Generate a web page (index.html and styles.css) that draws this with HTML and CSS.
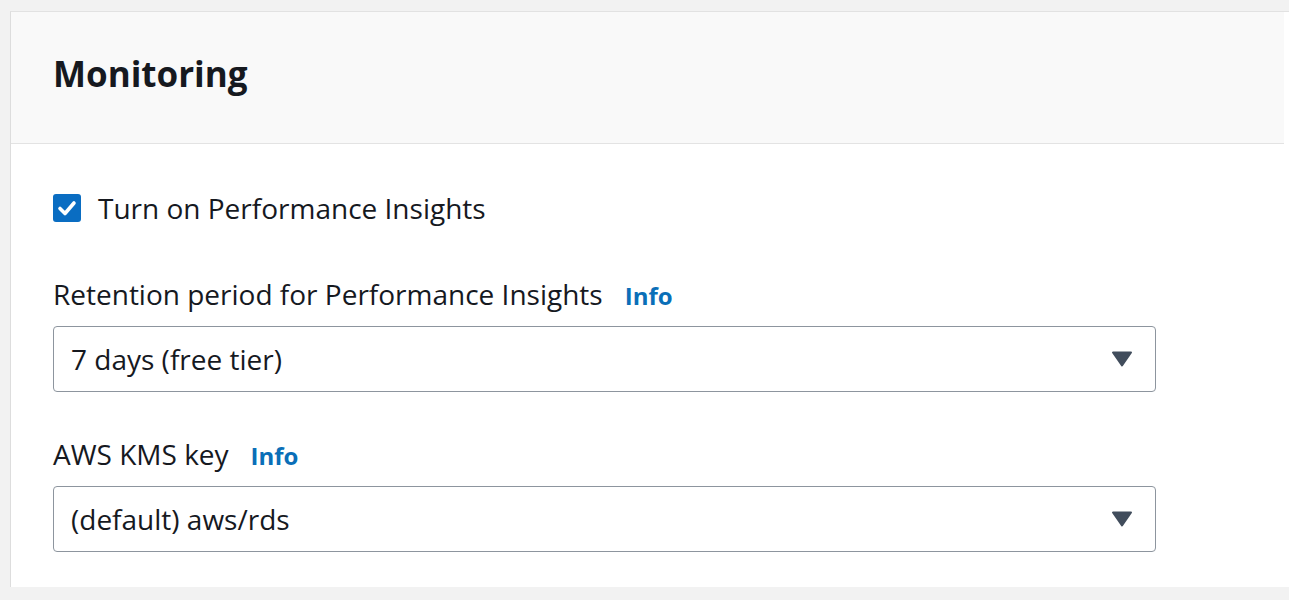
FILE: index.html
```html
<!DOCTYPE html>
<html>
<head>
<meta charset="utf-8">
<link rel="stylesheet" href="styles.css">
</head>
<body>
<div class="page">
  <div class="card">
    <div class="card-header">
      <h2 class="title">Monitoring</h2>
    </div>
    <div class="card-body">
      <label class="check-row">
        <span class="checkbox">
          <svg viewBox="0 0 28 28" width="28" height="28"><path d="M7 14.5 L12 19.5 L21 9" fill="none" stroke="#fff" stroke-width="3.6" stroke-linecap="round" stroke-linejoin="round"/></svg>
        </span>
        <span class="check-label">Turn on Performance Insights</span>
      </label>

      <div class="field">
        <div class="field-label"><span>Retention period for Performance Insights</span><a class="info">Info</a></div>
        <div class="select">
          <span class="select-value">7 days (free tier)</span>
          <svg class="caret" viewBox="0 0 22 16" width="22" height="16"><path d="M2 1.5 H20 L11 14.5 Z" fill="#414d5c" stroke="#414d5c" stroke-width="2" stroke-linejoin="round"/></svg>
        </div>
      </div>

      <div class="field">
        <div class="field-label"><span>AWS KMS key</span><a class="info">Info</a></div>
        <div class="select">
          <span class="select-value">(default) aws/rds</span>
          <svg class="caret" viewBox="0 0 22 16" width="22" height="16"><path d="M2 1.5 H20 L11 14.5 Z" fill="#414d5c" stroke="#414d5c" stroke-width="2" stroke-linejoin="round"/></svg>
        </div>
      </div>
    </div>
  </div>
</div>
</body>
</html>
```

FILE: styles.css
```css
* { box-sizing: border-box; }
html, body { margin: 0; padding: 0; }
body {
  background: #f2f2f2;
  font-family: "Open Sans", "Noto Sans", sans-serif;
  color: #16191f;
  height: 600px;
  overflow: hidden;
}
.page {
  padding: 11px 0 13px 10px;
}
.card {
  background: #fff;
  border-left: 1px solid #dddddd;
  border-top: 1px solid #e2e2e2;
  height: 576px;
}
.card-header {
  background: #f9f9f9;
  height: 132px;
  margin-right: 5px;
  border-bottom: 1px solid #e3e3e3;
  display: flex;
  align-items: center;
  padding-left: 42px;
  padding-bottom: 8px;
}
.title {
  margin: 0;
  font-size: 35px;
  font-weight: 700;
  color: #16191f;
}
.card-body {
  padding: 50px 0 0 42px;
}
.check-row {
  display: flex;
  align-items: center;
  gap: 17px;
  height: 28px;
}
.checkbox {
  width: 28px;
  height: 28px;
  border-radius: 3px;
  background: #0a6dc2;
  display: flex;
}
.check-label {
  font-size: 28px;
}
.field {
  margin-top: 54px;
  width: 1103px;
}
.field + .field { margin-top: 44px; }
.field-label {
  display: flex;
  align-items: baseline;
  gap: 22px;
  font-size: 28px;
  line-height: 36px;
}
.info {
  color: #0a6fb8;
  font-weight: 700;
  font-size: 24px;
}
.select {
  margin-top: 12px;
  height: 66px;
  border: 1.5px solid #8d959e;
  border-radius: 4px;
  display: flex;
  align-items: center;
  justify-content: space-between;
  padding: 0 22px 0 17px;
}
.select-value {
  font-size: 28px;
}
.caret { display: block; }
```
